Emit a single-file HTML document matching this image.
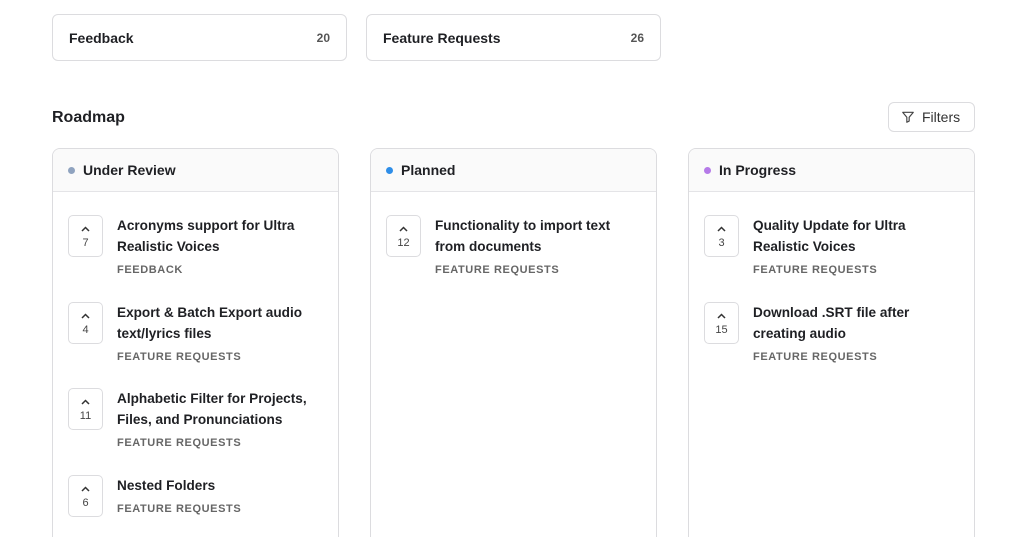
<!DOCTYPE html>
<html><head><meta charset="utf-8"><style>
*{box-sizing:border-box;margin:0;padding:0}
html,body{width:1024px;height:537px;overflow:hidden}
body{background:#fff;font-family:"Liberation Sans",sans-serif;color:#1f2024;position:relative}
.card{position:absolute;top:14px;height:47px;border:1px solid #dcdcdf;border-radius:6px;display:flex;align-items:center;justify-content:space-between;padding:0 16px;font-size:14px;font-weight:600}
.card span{font-size:12px;color:#555;font-weight:700}
.h{position:absolute;left:52px;top:109px;font-size:16px;font-weight:600}
.filt{position:absolute;left:888px;top:102px;width:87px;height:30px;border:1px solid #dcdcdf;border-radius:6px;font-size:14px;color:#333;display:flex;align-items:center;padding-left:12px;gap:7px}
.col{position:absolute;top:148px;width:287px;height:400px;border:1px solid #dcdcdf;border-radius:8px;overflow:hidden}
.ch{height:43px;background:#fafafa;border-bottom:1px solid #e4e4e7;display:flex;align-items:center;padding-left:15px;font-size:14px;font-weight:600}
.dot{width:7px;height:7px;border-radius:50%;margin-right:8px}
.it{position:absolute;left:15px;display:flex}
.v{width:35px;height:42px;border:1px solid #dcdcdf;border-radius:5px;display:flex;flex-direction:column;align-items:center;justify-content:center;font-size:11px;color:#444;flex:none;padding-top:2px}
.v svg{margin-bottom:5px}
.t{margin-left:14px;font-size:13.6px;font-weight:600;line-height:21px;width:200px;margin-top:0}
.c{font-size:11px;font-weight:700;color:#666;letter-spacing:.6px;margin-top:3px}
</style></head><body>
<div class="card" style="left:52px;width:295px">Feedback<span>20</span></div>
<div class="card" style="left:366px;width:295px">Feature Requests<span>26</span></div>
<div class="h">Roadmap</div>
<div class="filt"><svg width="14" height="14" viewBox="0 0 24 24" fill="none" stroke="#444" stroke-width="2" stroke-linejoin="round"><path d="M3 4h18l-7 8.5V19l-4 2v-8.5z"/></svg>Filters</div>

<div class="col" style="left:52px">
<div class="ch"><div class="dot" style="background:#8fa3bf"></div>Under Review</div>
<div class="it" style="top:66px"><div class="v"><svg width="9" height="6" viewBox="0 0 9 6"><path d="M1 5l3.5-3.5L8 5" fill="none" stroke="#333" stroke-width="1.5"/></svg>7</div><div class="t">Acronyms support for Ultra Realistic Voices<div class="c">FEEDBACK</div></div></div>
<div class="it" style="top:153px"><div class="v"><svg width="9" height="6" viewBox="0 0 9 6"><path d="M1 5l3.5-3.5L8 5" fill="none" stroke="#333" stroke-width="1.5"/></svg>4</div><div class="t">Export &amp; Batch Export audio text/lyrics files<div class="c">FEATURE REQUESTS</div></div></div>
<div class="it" style="top:239px"><div class="v"><svg width="9" height="6" viewBox="0 0 9 6"><path d="M1 5l3.5-3.5L8 5" fill="none" stroke="#333" stroke-width="1.5"/></svg>11</div><div class="t">Alphabetic Filter for Projects, Files, and Pronunciations<div class="c">FEATURE REQUESTS</div></div></div>
<div class="it" style="top:326px"><div class="v"><svg width="9" height="6" viewBox="0 0 9 6"><path d="M1 5l3.5-3.5L8 5" fill="none" stroke="#333" stroke-width="1.5"/></svg>6</div><div class="t">Nested Folders<div class="c">FEATURE REQUESTS</div></div></div>
</div>

<div class="col" style="left:370px">
<div class="ch"><div class="dot" style="background:#2e8ee8"></div>Planned</div>
<div class="it" style="top:66px"><div class="v"><svg width="9" height="6" viewBox="0 0 9 6"><path d="M1 5l3.5-3.5L8 5" fill="none" stroke="#333" stroke-width="1.5"/></svg>12</div><div class="t">Functionality to import text from documents<div class="c">FEATURE REQUESTS</div></div></div>
</div>

<div class="col" style="left:688px">
<div class="ch"><div class="dot" style="background:#b57ae8"></div>In Progress</div>
<div class="it" style="top:66px"><div class="v"><svg width="9" height="6" viewBox="0 0 9 6"><path d="M1 5l3.5-3.5L8 5" fill="none" stroke="#333" stroke-width="1.5"/></svg>3</div><div class="t">Quality Update for Ultra Realistic Voices<div class="c">FEATURE REQUESTS</div></div></div>
<div class="it" style="top:153px"><div class="v"><svg width="9" height="6" viewBox="0 0 9 6"><path d="M1 5l3.5-3.5L8 5" fill="none" stroke="#333" stroke-width="1.5"/></svg>15</div><div class="t">Download .SRT file after creating audio<div class="c">FEATURE REQUESTS</div></div></div>
</div>
</body></html>
